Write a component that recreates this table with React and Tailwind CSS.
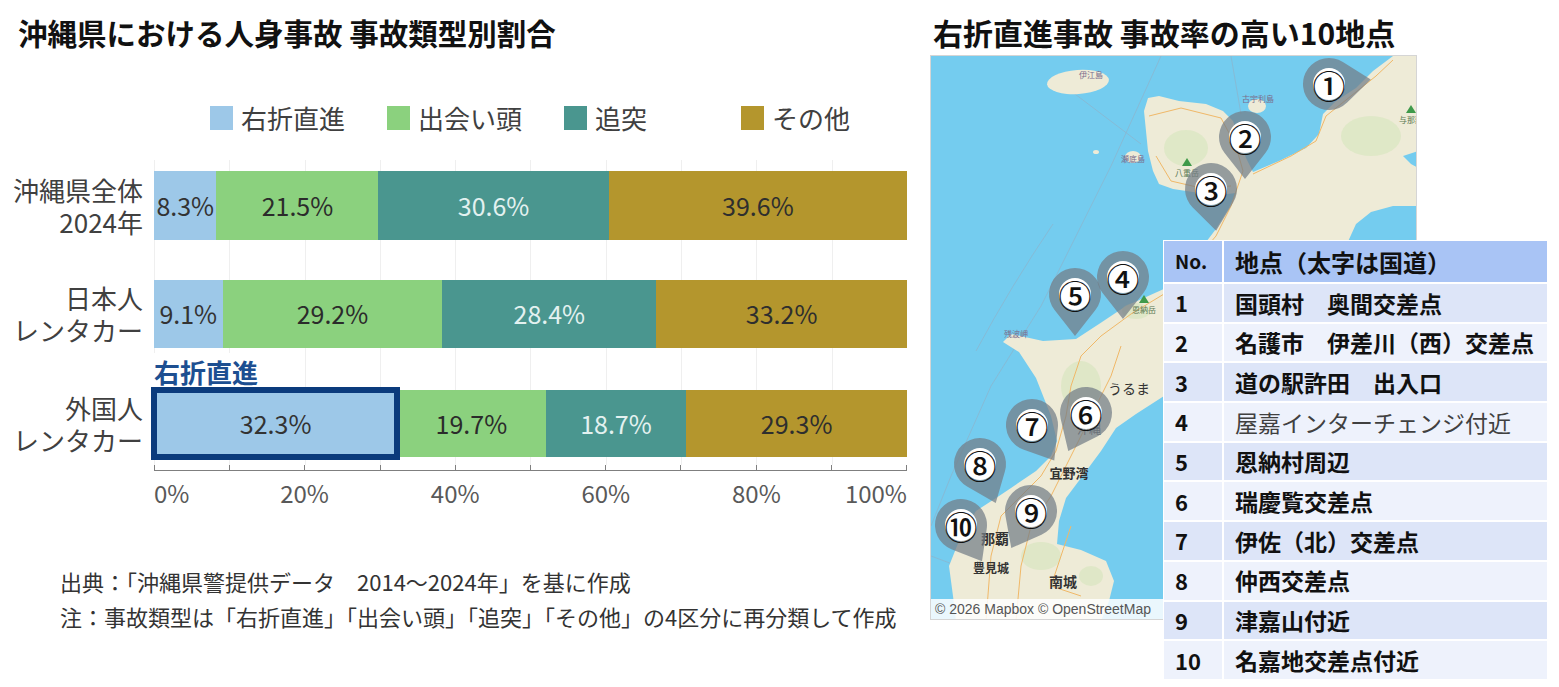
import React from 'react';

const SEGMENTS = [
  { name: '右折直進', bg: 'bg-[#9dc8e8]', text: 'text-[#333333]' },
  { name: '出会い頭', bg: 'bg-[#8bd17e]', text: 'text-[#2b2b2b]' },
  { name: '追突', bg: 'bg-[#4a968f]', text: 'text-[#e3f1f0]' },
  { name: 'その他', bg: 'bg-[#b4962d]', text: 'text-[#2e2e2e]' },
];

const ROWS = [
  { label: ['沖縄県全体', '2024年'], values: [8.3, 21.5, 30.6, 39.6] },
  { label: ['日本人', 'レンタカー'], values: [9.1, 29.2, 28.4, 33.2] },
  { label: ['外国人', 'レンタカー'], values: [32.3, 19.7, 18.7, 29.3], highlight: true },
];

const SPOTS = [
  { no: 1, name: '国頭村　奥間交差点', bold: true },
  { no: 2, name: '名護市　伊差川（西）交差点', bold: true },
  { no: 3, name: '道の駅許田　出入口', bold: true },
  { no: 4, name: '屋嘉インターチェンジ付近', bold: false },
  { no: 5, name: '恩納村周辺', bold: true },
  { no: 6, name: '瑞慶覧交差点', bold: true },
  { no: 7, name: '伊佐（北）交差点', bold: true },
  { no: 8, name: '仲西交差点', bold: true },
  { no: 9, name: '津嘉山付近', bold: true },
  { no: 10, name: '名嘉地交差点付近', bold: true },
];

// pins on the map: circle centre, rotation of the tail
const PINS = [
  { n: '①', x: 398, y: 28, rot: -96 },
  { n: '②', x: 314, y: 81, rot: 0 },
  { n: '③', x: 280, y: 133, rot: -7 },
  { n: '⑤', x: 144, y: 238, rot: 0 },
  { n: '④', x: 192, y: 221, rot: 0 },
  { n: '⑦', x: 101, y: 369, rot: -32 },
  { n: '⑥', x: 155, y: 357, rot: 25 },
  { n: '⑧', x: 49, y: 408, rot: -22 },
  { n: '⑩', x: 30, y: 469, rot: -30 },
  { n: '⑨', x: 100, y: 455, rot: 28 },
];

const LAND =
  'M462 0 L487 0 L487 95 L472 100 L480 108 L487 112 L487 150 L462 150 L440 156 L425 168 L415 190 L395 240 L340 280 L280 310 L233 340 L205 358 L185 372 L170 395 L150 422 L135 442 L128 465 L126 488 L150 494 L175 505 L183 525 L178 545 L170 565 L25 565 L22 540 L18 510 L30 480 L45 455 L65 442 L80 432 L105 415 L120 400 L126 385 L120 360 L105 322 L88 296 L72 286 L80 278 L112 285 L145 283 L168 268 L195 250 L215 241 L235 232 L255 210 L272 190 L285 173 L298 152 L305 137 L288 139 L262 136 L242 133 L228 128 L222 115 L217 95 L215 75 L213 55 L217 42 L228 40 L248 45 L275 48 L292 55 L302 65 L308 82 L315 102 L322 116 L348 105 L375 92 L388 78 L392 58 L405 45 L425 32 L442 15 Z';

function Pin({ n, x, y, rot }) {
  return (
    <g transform={`translate(${x} ${y})`}>
      <path
        d="M0 42 L-20.4 16.1 A26 26 0 1 1 20.4 16.1 Z"
        transform={`rotate(${rot})`}
        fill="#737d86"
        fillOpacity="0.72"
      />
      <circle r="16" fill="#ffffff" />
      <text
        x="0"
        y="1"
        textAnchor="middle"
        dominantBaseline="central"
        fontSize="33"
        fontWeight="500"
        fill="#111111"
        fontFamily="'Noto Sans CJK JP', sans-serif"
      >
        {n}
      </text>
    </g>
  );
}

function Mountain({ x, y, label }) {
  return (
    <g>
      <path d={`M${x - 5} ${y + 4} L${x} ${y - 4} L${x + 5} ${y + 4} Z`} fill="#3f9a4a" />
      <text x={x} y={y + 14} textAnchor="middle" fontSize="8" fill="#5c7a55">{label}</text>
    </g>
  );
}

function OkinawaMap() {
  return (
    <svg width="487" height="565" viewBox="0 0 487 565" className="block">
      <rect width="487" height="565" fill="#74ccef" />
      <g fill="none" stroke="#8ab6cf" strokeWidth="0.8">
        <path d="M230 0 L205 55 L180 110 L150 170 L110 250 L60 330 L20 420 L0 470" />
        <path d="M140 35 L210 88" />
        <path d="M300 0 L310 58" />
        <path d="M45 295 Q80 230 122 168" />
        <path d="M0 500 Q60 520 120 560" />
      </g>
      <ellipse cx="147" cy="26" rx="31" ry="12" fill="#eeebd7" transform="rotate(-4 147 26)" />
      <ellipse cx="202" cy="101" rx="8" ry="6" fill="#eeebd7" />
      <ellipse cx="326" cy="50" rx="9" ry="7" fill="#eeebd7" />
      <ellipse cx="165" cy="96" rx="3" ry="2" fill="#eeebd7" />
      <path d={LAND} fill="#eeebd7" />
      <g fill="#d6e6bd" opacity="0.6">
        <ellipse cx="255" cy="92" rx="22" ry="18" />
        <ellipse cx="440" cy="80" rx="30" ry="20" />
        <ellipse cx="150" cy="330" rx="20" ry="25" />
        <ellipse cx="205" cy="255" rx="14" ry="8" />
        <ellipse cx="110" cy="500" rx="20" ry="14" />
        <ellipse cx="160" cy="520" rx="12" ry="10" />
      </g>
      <g fill="none" stroke="#f0b868" strokeWidth="1">
        <path d="M218 60 L250 52 L290 62 L305 90 L312 115 L300 150 L285 180 L255 215 L233 238 L200 258 L170 280 L150 300 L140 330 L135 360 L125 395 L110 420 L90 440 L70 460 L60 500 L55 565" />
        <path d="M225 100 L240 125 L270 132 L300 130" />
        <path d="M322 118 L360 100 L385 85 L395 60 L420 40 L445 20 L462 4" />
        <path d="M190 290 L180 320 L165 350 L150 380 L135 410 L120 440 L100 470 L90 510 L85 565" />
        <path d="M140 470 L130 500 L120 530 L150 540" />
      </g>
      <g fontFamily="'Noto Sans CJK JP', sans-serif">
        <text x="160" y="22" textAnchor="middle" fontSize="8" fill="#7a6c8c">伊江島</text>
        <text x="327" y="46" textAnchor="middle" fontSize="8" fill="#7a6c8c">古宇利島</text>
        <text x="202" y="106" textAnchor="middle" fontSize="8" fill="#7a6c8c">瀬底島</text>
        <text x="85" y="281" textAnchor="middle" fontSize="8" fill="#7a6c8c">残波岬</text>
        <text x="198" y="338" textAnchor="middle" fontSize="14" fill="#333333">うるま</text>
        <text x="158" y="378" textAnchor="middle" fontSize="12" fill="#555555">沖縄</text>
        <text x="138" y="422" textAnchor="middle" fontSize="13" fontWeight="700" fill="#333333">宜野湾</text>
        <text x="64" y="488" textAnchor="middle" fontSize="14" fontWeight="700" fill="#333333">那覇</text>
        <text x="60" y="517" textAnchor="middle" fontSize="12" fontWeight="700" fill="#333333">豊見城</text>
        <text x="132" y="531" textAnchor="middle" fontSize="14" fontWeight="700" fill="#333333">南城</text>
        <Mountain x={256} y={106} label="八重岳" />
        <Mountain x={213} y={243} label="恩納岳" />
        <Mountain x={480} y={53} label="与那覇" />
      </g>
      {PINS.map((p) => (
        <Pin key={p.n} {...p} />
      ))}
    </svg>
  );
}

function Bar({ values, highlight }) {
  return (
    <div className="flex h-full w-full">
      {values.map((v, i) => {
        const seg = SEGMENTS[i];
        const last = i === values.length - 1;
        return (
          <div
            key={i}
            style={last ? undefined : { width: `${v}%` }}
            className={`${last ? 'flex-1' : ''} ${seg.bg} ${seg.text} flex items-center justify-center text-[25px] ${
              highlight && i === 0 ? 'relative z-10 outline-[6px] outline-[#0b3b7c] -outline-offset-[3px]' : ''
            }`}
          >
            {v}%
          </div>
        );
      })}
    </div>
  );
}

function AccidentChart() {
  return (
    <div className="w-[930px] shrink-0">
      <h1 className="pl-[18px] pt-[14px] h-[50px] text-[29.5px] leading-[36px] font-bold text-[#111111]">
        沖縄県における人身事故 事故類型別割合
      </h1>

      <div className="mt-[50px] pl-[210px] flex h-[36px] items-center">
        {SEGMENTS.map((s) => (
          <div key={s.name} className="w-[177px] flex items-center gap-[8px]">
            <span className={`w-[23px] h-[24px] ${s.bg}`} />
            <span className="text-[26px] leading-[36px] text-[#404040]">{s.name}</span>
          </div>
        ))}
      </div>

      <div className="mt-[24px] flex">
        <div className="w-[143px] pt-[11px] text-right text-[26px] leading-[32px] text-[#404040]">
          {ROWS.map((r, i) => (
            <div
              key={i}
              className={`flex flex-col justify-center ${
                i === 0 ? 'h-[69px]' : i === 1 ? 'mt-[40px] h-[68px]' : 'mt-[42px] h-[67px]'
              }`}
            >
              <div>{r.label[0]}</div>
              <div>{r.label[1]}</div>
            </div>
          ))}
        </div>

        <div className="ml-[11px] w-[753px]">
          <div className="pt-[11px] pb-[8px] bg-[repeating-linear-gradient(to_right,#efefef_0,#efefef_1px,transparent_1px,transparent_75.3px)]">
            <div className="h-[69px]">
              <Bar values={ROWS[0].values} />
            </div>
            <div className="mt-[40px] h-[68px]">
              <Bar values={ROWS[1].values} />
            </div>
            <div className="mt-[10px] h-[28px] leading-[28px] text-[26px] font-bold text-[#1d4f91]">
              <span className="bg-white">右折直進</span>
            </div>
            <div className="mt-[4px] h-[67px]">
              <Bar values={ROWS[2].values} highlight />
            </div>
          </div>
          <div className="flex h-[6px] border-b-[1.5px] border-[#7f7f7f]">
            {Array.from({ length: 10 }).map((_, i) => (
              <div key={i} className={`flex-1 border-l border-[#7f7f7f] ${i === 9 ? 'border-r' : ''}`} />
            ))}
          </div>
          <div className="mt-[8px] flex text-[24px] leading-[28px] text-[#595959]">
            <div className="flex-1">0%</div>
            <div className="flex-1"><span className="inline-block -translate-x-1/2">20%</span></div>
            <div className="flex-1"><span className="inline-block -translate-x-1/2">40%</span></div>
            <div className="flex-1"><span className="inline-block -translate-x-1/2">60%</span></div>
            <div className="flex-1 flex justify-between">
              <span className="inline-block -translate-x-1/2">80%</span>
              <span>100%</span>
            </div>
          </div>
        </div>
      </div>

      <div className="mt-[57px] pl-[60px] text-[22px] leading-[35px] text-[#333333]">
        <p>出典：「沖縄県警提供データ　2014～2024年」を基に作成</p>
        <p>注：事故類型は「右折直進」「出会い頭」「追突」「その他」の4区分に再分類して作成</p>
      </div>
    </div>
  );
}

function SpotTable() {
  return (
    <div className="absolute left-[233px] top-[185px] w-[385px] bg-white p-[1px]">
      <div className="flex h-[41px] bg-[#a9c4f5] text-[#111111] font-bold">
        <div className="w-[58px] pl-[11px] flex items-center text-[19px]">No.</div>
        <div className="w-[2px] bg-white" />
        <div className="flex-1 pl-[11px] flex items-center text-[24px]">地点（太字は国道）</div>
      </div>
      {SPOTS.map((s, i) => (
        <div
          key={s.no}
          className={`mt-[2px] flex h-[37.7px] ${i % 2 === 0 ? 'bg-[#dde5f8]' : 'bg-[#eef2fc]'}`}
        >
          <div className="w-[58px] pl-[11px] flex items-center text-[22px] font-bold text-[#111111]">{s.no}</div>
          <div className="w-[2px] bg-white" />
          <div
            className={`flex-1 pl-[11px] flex items-center text-[23px] ${
              s.bold ? 'font-bold text-[#111111]' : 'font-normal text-[#404040]'
            }`}
          >
            {s.name}
          </div>
        </div>
      ))}
    </div>
  );
}

function SpotMap() {
  return (
    <div className="flex-1">
      <h2 className="pl-[3px] pt-[14px] h-[50px] text-[30px] leading-[36px] font-bold text-[#111111]">
        右折直進事故 事故率の高い10地点
      </h2>
      <div className="relative mt-[5px] w-[487px] h-[565px]">
        <div className="w-full h-full overflow-hidden border border-[#d5d5d5]">
          <OkinawaMap />
        </div>
        <div className="absolute left-[1px] bottom-[1px] w-[232px] h-[20px] bg-white/85 pl-[4px] text-[14px] leading-[20px] text-[#555555] font-['Liberation_Sans',Arial,sans-serif]">
          © 2026 Mapbox © OpenStreetMap
        </div>
        <SpotTable />
      </div>
    </div>
  );
}

export default function App() {
  return (
    <div className="w-[1559px] h-[687px] overflow-hidden bg-white flex font-['Noto_Sans_CJK_JP','Noto_Sans',sans-serif]">
      <AccidentChart />
      <SpotMap />
    </div>
  );
}
